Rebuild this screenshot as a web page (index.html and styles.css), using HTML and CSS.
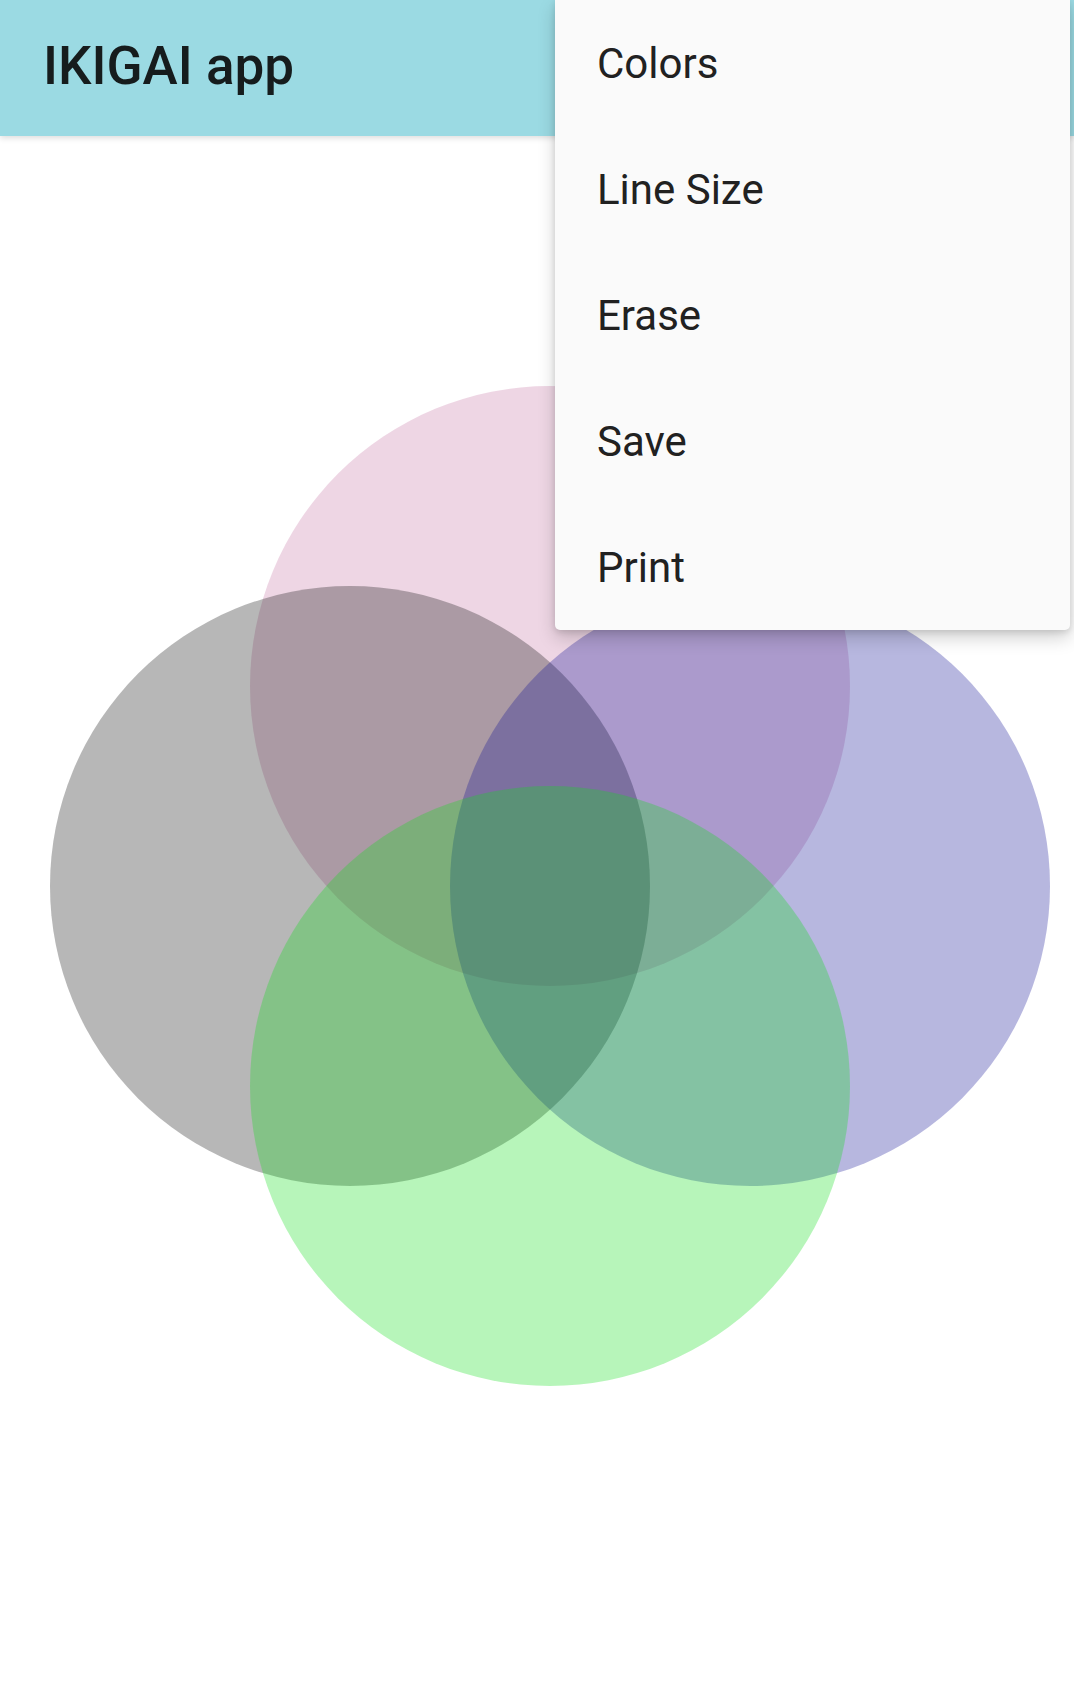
FILE: index.html
```html
<!DOCTYPE html>
<html lang="en">

<head>
  <meta charset="UTF-8">
  <meta name="viewport" content="width=device-width, initial-scale=1.0">
  <title>IKIGAI app</title>
  <link rel="stylesheet" href="styles.css">
</head>

<body>

  <div class="toolbar">
    <h1 class="titulo">IKIGAI app</h1>
  </div>

  <div class="area">
    <svg class="desenho" viewBox="0 0 1074 1545" width="1074" height="1545">
      <circle cx="550" cy="550" r="300" class="c-rosa" />
      <circle cx="350" cy="750" r="300" class="c-cinza" />
      <circle cx="750" cy="750" r="300" class="c-roxo" />
      <circle cx="550" cy="950" r="300" class="c-verde" />
    </svg>
  </div>

  <ul class="menu">
    <li class="item">Colors</li>
    <li class="item">Line Size</li>
    <li class="item">Erase</li>
    <li class="item">Save</li>
    <li class="item">Print</li>
  </ul>

</body>

</html>
```

FILE: styles.css
```css
html,
body {
  margin: 0;
  padding: 0;
  background-color: white;
  font-family: Roboto, "Noto Sans", sans-serif;
}

body {
  position: relative;
  min-height: 1681px;
  overflow: hidden;
}

.toolbar {
  display: flex;
  align-items: center;
  height: 136px;
  padding-left: 43px;
  padding-bottom: 4px;
  box-sizing: border-box;
  background-color: #9bdae3;
  box-shadow: 0px 2px 6px rgba(0, 0, 0, 0.14);
  position: relative;
  z-index: 1;
}

.titulo {
  margin: 0;
  font-size: 53px;
  font-weight: 500;
  color: #161c1d;
}

.area {
  display: block;
}

.desenho {
  display: block;
}

.c-rosa {
  fill: rgba(198, 118, 165, 0.3);
}

.c-cinza {
  fill: rgba(18, 18, 18, 0.3);
}

.c-roxo {
  fill: rgba(18, 18, 148, 0.3);
}

.c-verde {
  fill: rgba(18, 222, 25, 0.3);
}

.menu {
  position: absolute;
  top: 0;
  right: 4px;
  width: 515px;
  margin: 0;
  padding: 0;
  list-style: none;
  background-color: #fafafa;
  border-radius: 0 0 5px 5px;
  box-shadow: 0px 8px 18px rgba(0, 0, 0, 0.18), 0px 2px 6px rgba(0, 0, 0, 0.12);
  z-index: 2;
}

.item {
  display: flex;
  align-items: center;
  height: 126px;
  padding-left: 42px;
  font-size: 42px;
  color: #212121;
}
```
